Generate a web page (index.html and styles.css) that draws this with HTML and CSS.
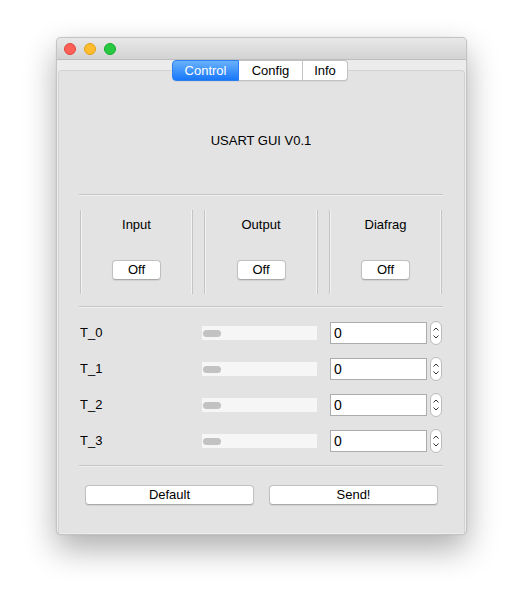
FILE: index.html
```html
<!DOCTYPE html>
<html>
<head>
<meta charset="utf-8">
<link rel="stylesheet" href="styles.css">
</head>
<body>
<div class="window">
  <div class="titlebar">
    <span class="light red"></span>
    <span class="light yellow"></span>
    <span class="light green"></span>
  </div>
  <div class="content">
    <div class="tabbar">
      <div class="tab active">Control</div>
      <div class="tab">Config</div>
      <div class="tab last">Info</div>
    </div>
    <div class="pane">
      <div class="title">USART GUI V0.1</div>
      <div class="hr hr-top"></div>
      <div class="groups">
        <div class="group">
          <div class="glabel">Input</div>
          <button class="btn small">Off</button>
        </div>
        <div class="group">
          <div class="glabel">Output</div>
          <button class="btn small">Off</button>
        </div>
        <div class="group">
          <div class="glabel">Diafrag</div>
          <button class="btn small">Off</button>
        </div>
      </div>
      <div class="hr hr-mid"></div>
      <div class="rows">
        <div class="row">
          <span class="rlabel">T_0</span>
          <div class="slider"><span class="handle"></span></div>
          <div class="spin">0</div>
          <div class="stepper"><svg width="12" height="24" viewBox="0 0 12 24"><path d="M3.5 9.5 L6 7 L8.5 9.5 M3.5 14.5 L6 17 L8.5 14.5" fill="none" stroke="#333" stroke-width="1"/></svg></div>
        </div>
        <div class="row">
          <span class="rlabel">T_1</span>
          <div class="slider"><span class="handle"></span></div>
          <div class="spin">0</div>
          <div class="stepper"><svg width="12" height="24" viewBox="0 0 12 24"><path d="M3.5 9.5 L6 7 L8.5 9.5 M3.5 14.5 L6 17 L8.5 14.5" fill="none" stroke="#333" stroke-width="1"/></svg></div>
        </div>
        <div class="row">
          <span class="rlabel">T_2</span>
          <div class="slider"><span class="handle"></span></div>
          <div class="spin">0</div>
          <div class="stepper"><svg width="12" height="24" viewBox="0 0 12 24"><path d="M3.5 9.5 L6 7 L8.5 9.5 M3.5 14.5 L6 17 L8.5 14.5" fill="none" stroke="#333" stroke-width="1"/></svg></div>
        </div>
        <div class="row">
          <span class="rlabel">T_3</span>
          <div class="slider"><span class="handle"></span></div>
          <div class="spin">0</div>
          <div class="stepper"><svg width="12" height="24" viewBox="0 0 12 24"><path d="M3.5 9.5 L6 7 L8.5 9.5 M3.5 14.5 L6 17 L8.5 14.5" fill="none" stroke="#333" stroke-width="1"/></svg></div>
        </div>
      </div>
      <div class="hr hr-bottom"></div>
      <div class="actions">
        <button class="btn wide">Default</button>
        <button class="btn wide">Send!</button>
      </div>
    </div>
  </div>
</div>
</body>
</html>
```

FILE: styles.css
```css
html, body {
  margin: 0;
  padding: 0;
  background: #ffffff;
}
body {
  font-family: "Liberation Sans", Arial, sans-serif;
  font-size: 13px;
  color: #000;
  padding: 37px 0 0 56px;
  min-height: 609px;
  box-sizing: border-box;
}
.window {
  width: 411px;
  height: 498px;
  box-sizing: border-box;
  border: 1px solid #c4c4c4;
  border-radius: 5px;
  background: #e3e3e3;
  box-shadow: 0 14px 32px rgba(0,0,0,0.32), 0 0 1px rgba(0,0,0,0.2);
  display: flex;
  flex-direction: column;
  overflow: hidden;
}
.titlebar {
  height: 21px;
  flex: none;
  background: linear-gradient(#e9e8e9, #d4d3d4);
  border-bottom: 1px solid #bdbdbd;
  display: flex;
  align-items: center;
  gap: 8px;
  padding-left: 7px;
}
.light {
  width: 12px;
  height: 12px;
  box-sizing: border-box;
  border-radius: 50%;
}
.red { background: #fe5f57; border: 1px solid #e2463f; }
.yellow { background: #febc2e; border: 1px solid #e1a116; }
.green { background: #28c840; border: 1px solid #14ae2a; }
.content {
  flex: 1;
  background: #ececec;
  display: flex;
  flex-direction: column;
  padding: 0 1px 1px;
}
.tabbar {
  display: flex;
  justify-content: center;
  margin-top: 0;
  margin-bottom: -11px;
  padding-right: 3px;
  position: relative;
  z-index: 1;
}
.tab {
  height: 21px;
  box-sizing: border-box;
  background: #ffffff;
  border: 1px solid #c2c2c2;
  border-left: none;
  display: flex;
  align-items: center;
  justify-content: center;
  color: #000;
  box-shadow: 0 1px 0 rgba(0,0,0,0.06);
}
.tab.active {
  width: 67px;
  background: linear-gradient(#69b1fb, #1877fa);
  border: 1px solid #2b7ff0;
  color: #ffffff;
  border-radius: 4px 0 0 4px;
}
.tab:nth-child(2) { width: 64px; }
.tab.last {
  width: 45px;
  border-radius: 0 4px 4px 0;
}
.pane {
  flex: 1;
  background: #e3e3e3;
  border: 1px solid #d2d2d2;
  border-bottom: none;
  border-radius: 4px 4px 0 0;
  padding: 0 21px 0 20px;
  display: flex;
  flex-direction: column;
}
.title {
  margin-top: 60px;
  height: 20px;
  line-height: 20px;
  text-align: center;
}
.hr {
  height: 1px;
  background: #c6c6c6;
  border-bottom: 1px solid #efefef;
}
.hr-top { margin-top: 43px; }
.groups {
  margin-top: 14px;
  height: 84px;
  display: grid;
  grid-template-columns: 113px 114px 113px;
  justify-content: space-between;
  padding: 0 1px;
}
.group {
  border-left: 1px solid #c4c4c4;
  border-right: 1px solid #c4c4c4;
  box-shadow: inset 1px 0 0 #f2f2f2, inset -1px 0 0 #f2f2f2;
  display: flex;
  flex-direction: column;
  align-items: center;
}
.glabel {
  margin-top: 7px;
  line-height: 16px;
  height: 16px;
}
.btn {
  font-family: "Liberation Sans", Arial, sans-serif;
  font-size: 13px;
  color: #000;
  background: #ffffff;
  border: 1px solid #c0c0c0;
  border-bottom-color: #a9a9a9;
  border-radius: 4px;
  box-shadow: 0 1px 1px rgba(0,0,0,0.08);
  height: 20px;
  padding: 0;
  line-height: 18px;
}
.small {
  width: 49px;
  margin-top: 27px;
}
.hr-mid { margin-top: 12px; }
.rows {
  margin-top: 7px;
  display: flex;
  flex-direction: column;
}
.row {
  height: 36px;
  display: grid;
  grid-template-columns: 110px 115px 97px 12px;
  column-gap: 13px;
  align-items: center;
  padding-left: 0;
}
.row .stepper { margin-left: -10px; }
.rlabel {
  line-height: 16px;
  padding-left: 1px;
}
.slider {
  height: 14px;
  background: #f6f6f6;
  display: flex;
  align-items: center;
  padding-left: 1px;
}
.handle {
  width: 18px;
  height: 7px;
  border-radius: 4px;
  background: #c2c2c2;
}
.spin {
  height: 22px;
  box-sizing: border-box;
  background: #ffffff;
  border: 1px solid #acacac;
  padding-left: 3px;
  line-height: 20px;
  color: #000;
  font-size: 14px;
}
.stepper {
  width: 12px;
  height: 24px;
  box-sizing: border-box;
  border: 1px solid #bcbcbc;
  border-radius: 6px;
  background: #ffffff;
  display: flex;
}
.stepper svg {
  margin: -1px;
}
.hr-bottom { margin-top: 6px; }
.actions {
  margin-top: 18px;
  display: flex;
  gap: 15px;
  padding-left: 6px;
}
.wide {
  width: 169px;
}
```
